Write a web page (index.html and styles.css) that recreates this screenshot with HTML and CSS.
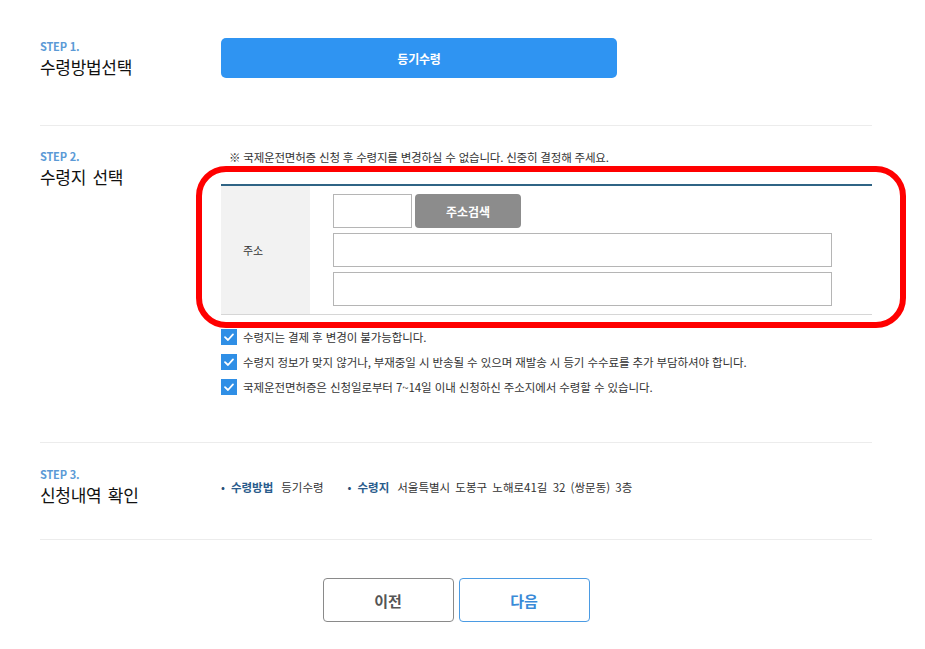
FILE: index.html
```html
<!DOCTYPE html>
<html lang="ko">
<head>
<meta charset="utf-8">
<title>수령방법 선택</title>
<link rel="stylesheet" href="styles.css">
</head>
<body>
<div class="page">
  <section class="step step1">
    <div class="step-head">
      <div class="step-no">STEP 1.</div>
      <div class="step-title">수령방법선택</div>
    </div>
    <div class="step-body">
      <button class="method-btn" type="button">등기수령</button>
    </div>
  </section>

  <section class="step step2">
    <div class="step-head">
      <div class="step-no">STEP 2.</div>
      <div class="step-title">수령지 선택</div>
    </div>
    <div class="step-body">
      <p class="notice">※ 국제운전면허증 신청 후 수령지를 변경하실 수 없습니다. 신중히 결정해 주세요.</p>
      <div class="addr-table">
        <div class="addr-label">주소</div>
        <div class="addr-fields">
          <div class="zip-row">
            <span class="input zip"></span>
            <button class="search-btn" type="button">주소검색</button>
          </div>
          <span class="input wide"></span>
          <span class="input wide"></span>
        </div>
      </div>
      <ul class="checks">
        <li><span class="chk"><svg viewBox="0 0 16 16" width="16" height="16"><path d="M4 8.2 L7 11 L12 5.4" fill="none" stroke="#fff" stroke-width="1.8" stroke-linecap="round" stroke-linejoin="round"/></svg></span>수령지는 결제 후 변경이 불가능합니다.</li>
        <li><span class="chk"><svg viewBox="0 0 16 16" width="16" height="16"><path d="M4 8.2 L7 11 L12 5.4" fill="none" stroke="#fff" stroke-width="1.8" stroke-linecap="round" stroke-linejoin="round"/></svg></span>수령지 정보가 맞지 않거나, 부재중일 시 반송될 수 있으며 재발송 시 등기 수수료를 추가 부담하셔야 합니다.</li>
        <li><span class="chk"><svg viewBox="0 0 16 16" width="16" height="16"><path d="M4 8.2 L7 11 L12 5.4" fill="none" stroke="#fff" stroke-width="1.8" stroke-linecap="round" stroke-linejoin="round"/></svg></span>국제운전면허증은 신청일로부터 7~14일 이내 신청하신 주소지에서 수령할 수 있습니다.</li>
      </ul>
      <div class="highlight"></div>
    </div>
  </section>

  <section class="step step3">
    <div class="step-head">
      <div class="step-no">STEP 3.</div>
      <div class="step-title">신청내역 확인</div>
    </div>
    <div class="step-body summary">
      <span class="sum-item"><b>수령방법</b>등기수령</span>
      <span class="sum-item addr"><b>수령지</b>서울특별시 도봉구 노해로41길 32 (쌍문동) 3층</span>
    </div>
  </section>

  <div class="nav">
    <button class="nav-btn prev" type="button">이전</button>
    <button class="nav-btn next" type="button">다음</button>
  </div>
</div>
</body>
</html>
```

FILE: styles.css
```css
* { box-sizing: border-box; }
html, body { margin: 0; padding: 0; background: #fff; }
body {
  font-family: "Noto Sans CJK KR", "Noto Sans", sans-serif;
  color: #222;
  width: 925px;
  height: 649px;
  overflow: hidden;
}
.page {
  width: 832px;
  margin-left: 40px;
}
.step {
  display: grid;
  grid-template-columns: 181px 1fr;
  border-bottom: 1px solid #ececec;
}
.step-no {
  font-size: 11px;
  font-weight: 700;
  color: #5b9ad6;
  line-height: 14px;
  letter-spacing: -0.2px;
}
.step-title {
  font-size: 17px;
  line-height: 22px;
  color: #111;
  margin-top: 3px;
  word-spacing: 2px;
  letter-spacing: -0.3px;
}
.step1 { padding: 38px 0 47px; }
.step1 .step-head { padding-top: 1px; }
.method-btn {
  display: block;
  width: 396px;
  height: 40px;
  border: 0;
  border-radius: 5px;
  background: #2f94f2;
  color: #fff;
  font-family: inherit;
  font-size: 12px;
  font-weight: 700;
  letter-spacing: -0.2px;
}
.step2 { padding: 23px 0 48px; }
.step2 .step-head { padding-top: 0; }
.step2 .step-body { position: relative; }
.notice {
  margin: 0 0 19px 8px;
  font-size: 11.5px;
  line-height: 16px;
  color: #333;
  letter-spacing: -0.2px;
}
.addr-table {
  display: grid;
  grid-template-columns: 89px 1fr;
  border-top: 2px solid #2f6485;
  border-bottom: 1px solid #d6d6d6;
}
.addr-label {
  background: #f2f2f2;
  display: flex;
  align-items: center;
  padding-left: 22px;
  font-size: 11px;
  color: #333;
}
.addr-fields {
  display: flex;
  flex-direction: column;
  gap: 5px;
  padding: 8px 0 8px 23px;
}
.zip-row { display: flex; gap: 3px; }
.input {
  display: block;
  height: 34px;
  border: 1px solid #b5b5b5;
  background: #fff;
}
.input.zip { width: 79px; }
.input.wide { width: 499px; }
.search-btn {
  width: 106px;
  height: 34px;
  border: 0;
  border-radius: 4px;
  background: #8c8c8c;
  color: #fff;
  font-family: inherit;
  font-size: 12px;
  font-weight: 700;
}
.checks {
  list-style: none;
  margin: 14px 0 0;
  padding: 0;
  display: flex;
  flex-direction: column;
  gap: 10px;
}
.checks li {
  display: flex;
  align-items: center;
  height: 15px;
  font-size: 11.5px;
  color: #333;
  letter-spacing: -0.1px;
}
.chk {
  width: 16px;
  height: 16px;
  background: #2f8fe6;
  margin-right: 6px;
  display: inline-flex;
  flex: none;
}
.highlight {
  position: absolute;
  left: -25px;
  top: 17px;
  width: 710px;
  height: 162px;
  border: 6px solid #ff0000;
  border-radius: 30px;
  pointer-events: none;
}
.step3 { padding: 24px 0 33px; }
.summary {
  padding-top: 12px;
  font-size: 11.5px;
  color: #333;
  display: flex;
  gap: 24px;
}
.sum-item::before {
  content: "•";
  color: #2a4f78;
  margin-right: 6px;
}
.sum-item b {
  color: #2a5c8c;
  font-weight: 700;
  margin-right: 8px;
}
.sum-item.addr { word-spacing: 2px; }
.nav {
  display: flex;
  justify-content: center;
  gap: 5px;
  padding-top: 38px;
}
.nav-btn {
  width: 131px;
  height: 44px;
  background: #fff;
  border-radius: 4px;
  font-family: inherit;
  font-size: 15px;
  font-weight: 700;
}
.nav-btn.prev { border: 1px solid #8a8a8a; color: #555; }
.nav-btn.next { border: 1px solid #4b9be3; color: #3a8ad8; }
```
